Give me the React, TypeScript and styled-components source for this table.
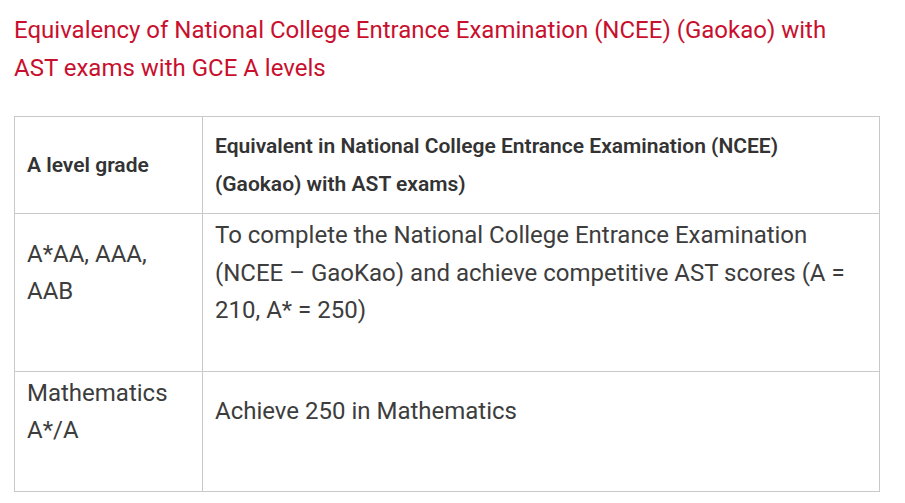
import React from "react";
import styled, { createGlobalStyle } from "styled-components";

const Global = createGlobalStyle`
  html, body { margin: 0; padding: 0; background: #fff; }
  body { font-family: Roboto, "Liberation Sans", Arial, sans-serif; }
`;

const Page = styled.div`
  padding: 11px 0 0 14px;
  width: 866px;
`;

const Title = styled.h2`
  margin: 0 0 29px 0;
  max-width: 850px;
  font-size: 24px;
  line-height: 38px;
  font-weight: 400;
  color: #c8102e;
`;

const Table = styled.table`
  width: 866px;
  border-collapse: collapse;
  table-layout: fixed;
  border: 1px solid #c9c9c9;
`;

const HeadCell = styled.th`
  border: 1px solid #c9c9c9;
  padding: 10px 12px;
  text-align: left;
  vertical-align: middle;
  font-size: 21px;
  line-height: 38px;
  font-weight: 600;
  color: #333;
`;

const Cell = styled.td`
  border: 1px solid #c9c9c9;
  padding: 3px 12px 41px 12px;
  vertical-align: middle;
  font-size: 24px;
  line-height: 37.5px;
  font-weight: 400;
  color: #3d3d3d;
`;

const rows = [
  {
    grade: "A*AA, AAA, AAB",
    eq: "To complete the National College Entrance Examination (NCEE – GaoKao) and achieve competitive AST scores (A = 210, A* = 250)",
  },
  { grade: "Mathematics A*/A", eq: "Achieve 250 in Mathematics" },
];

export default function App() {
  return (
    <>
      <Global />
      <Page>
        <Title>
          Equivalency of National College Entrance Examination (NCEE) (Gaokao) with AST exams with GCE A levels
        </Title>
        <Table>
          <colgroup>
            <col style={{ width: "188px" }} />
            <col />
          </colgroup>
          <thead>
            <tr>
              <HeadCell>A level grade</HeadCell>
              <HeadCell>
                Equivalent in National College Entrance Examination (NCEE) (Gaokao) with AST exams)
              </HeadCell>
            </tr>
          </thead>
          <tbody>
            {rows.map((r) => (
              <tr key={r.grade}>
                <Cell>{r.grade}</Cell>
                <Cell>{r.eq}</Cell>
              </tr>
            ))}
          </tbody>
        </Table>
      </Page>
    </>
  );
}
